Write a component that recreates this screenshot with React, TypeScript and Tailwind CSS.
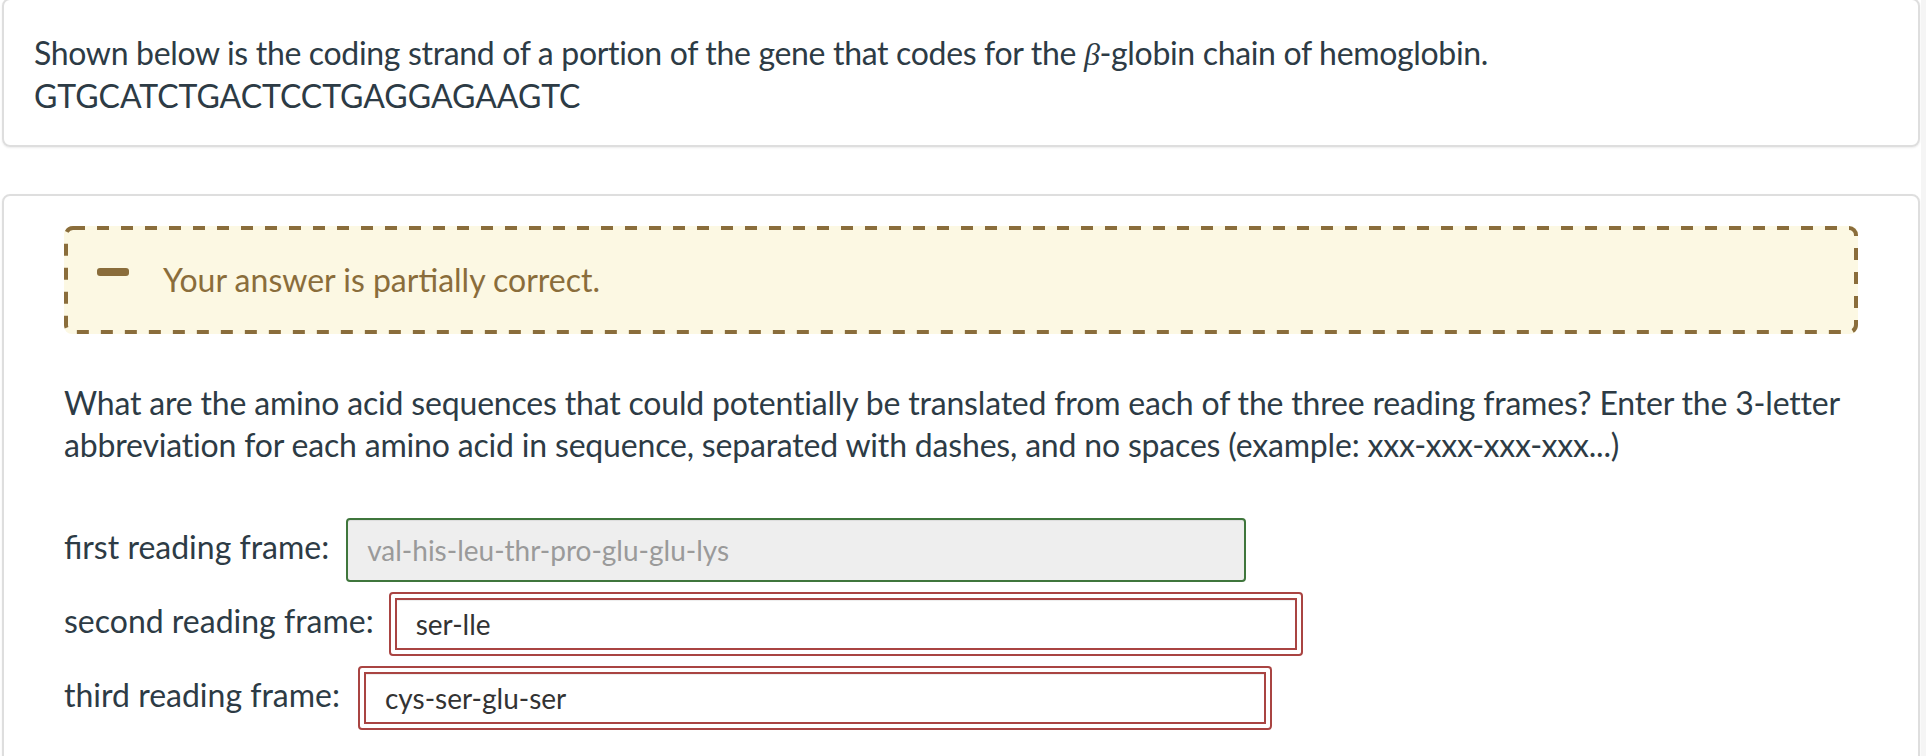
import React from "react";

export default function App() {
  return (
    <div className="flex w-[1926px] min-h-[756px] bg-white font-['Lato','Noto_Sans',sans-serif] text-[#2d3b45] overflow-hidden">
      <div className="w-[1921px] pl-[2px] pr-[1px]">
        {/* Card 1 */}
        <div className="-mt-[2px] border-2 border-[#dedede] rounded-[8px] shadow-[0_1px_2px_rgba(0,0,0,0.08)] px-[30px] pt-[32px] pb-[28px] text-[32px] leading-[42px]">
          <span className="tracking-[-0.33px]">
            Shown below is the coding strand of a portion of the gene that codes for the{" "}
            <span className="font-['Liberation_Serif',serif] italic">β</span>-globin chain of hemoglobin.
          </span>
          <br />
          GTGCATCTGACTCCTGAGGAGAAGTC
        </div>

        {/* Card 2 */}
        <div className="mt-[47px] border-2 border-[#dedede] rounded-[8px] shadow-[0_1px_2px_rgba(0,0,0,0.08)] px-[60px] pt-[30px] pb-[40px] text-[32px] leading-[42px]">
          <div className="relative flex items-center bg-[#fcf8e3] rounded-[8px] pl-[33px] py-[33px] text-[#8a6d3b]">
            <svg className="pointer-events-none absolute inset-0 w-full h-full" preserveAspectRatio="none">
              <rect x="2" y="2" rx="7" ry="7" fill="none" stroke="#8a6d3b" strokeWidth="4" strokeDasharray="12 12" style={{ width: "calc(100% - 4px)", height: "calc(100% - 4px)" }} />
            </svg>
            <div className="w-[32px] h-[8px] rounded-[3px] bg-[#8a6d3b] mr-[34px] -mt-[16px]" />
            <span>Your answer is partially correct.</span>
          </div>

          <p className="mt-[48px] tracking-[-0.18px]">
            What are the amino acid sequences that could potentially be translated from each of the three reading frames? Enter the 3-letter
            <br />
            abbreviation for each amino acid in sequence, separated with dashes, and no spaces (example: xxx-xxx-xxx-xxx...)
          </p>

          <div className="mt-[52px] flex flex-col gap-[10px]">
            <div className="flex items-center">
              <span className="mr-[17px] -mt-[6px]">first reading frame:</span>
              <input
                readOnly
                value="val-his-leu-thr-pro-glu-glu-lys"
                className="w-[900px] h-[64px] border-2 border-[#3f763c] bg-[#eeeeee] rounded-[4px] px-[19px] text-[28px] text-[#9a9a9a] shadow-[inset_0_1px_1px_rgba(0,0,0,0.075)] outline-none"
              />
            </div>
            <div className="flex items-center">
              <span className="mr-[15px] -mt-[6px]">second reading frame:</span>
              <div className="border-2 border-[#a94442] rounded-[4px] p-[4px]">
                <input
                  readOnly
                  value="ser-lle"
                  className="block w-[902px] h-[52px] border-2 border-[#a94442] bg-white px-[19px] text-[28px] text-[#333333] shadow-[inset_0_1px_1px_rgba(0,0,0,0.075)] outline-none"
                />
              </div>
            </div>
            <div className="flex items-center">
              <span className="mr-[18px] -mt-[6px]">third reading frame:</span>
              <div className="border-2 border-[#a94442] rounded-[4px] p-[4px]">
                <input
                  readOnly
                  value="cys-ser-glu-ser"
                  className="block w-[902px] h-[52px] border-2 border-[#a94442] bg-white px-[19px] text-[28px] text-[#333333] shadow-[inset_0_1px_1px_rgba(0,0,0,0.075)] outline-none"
                />
              </div>
            </div>
          </div>
        </div>
      </div>
      <div className="w-[5px] bg-[#f5f5f5]" />
    </div>
  );
}
